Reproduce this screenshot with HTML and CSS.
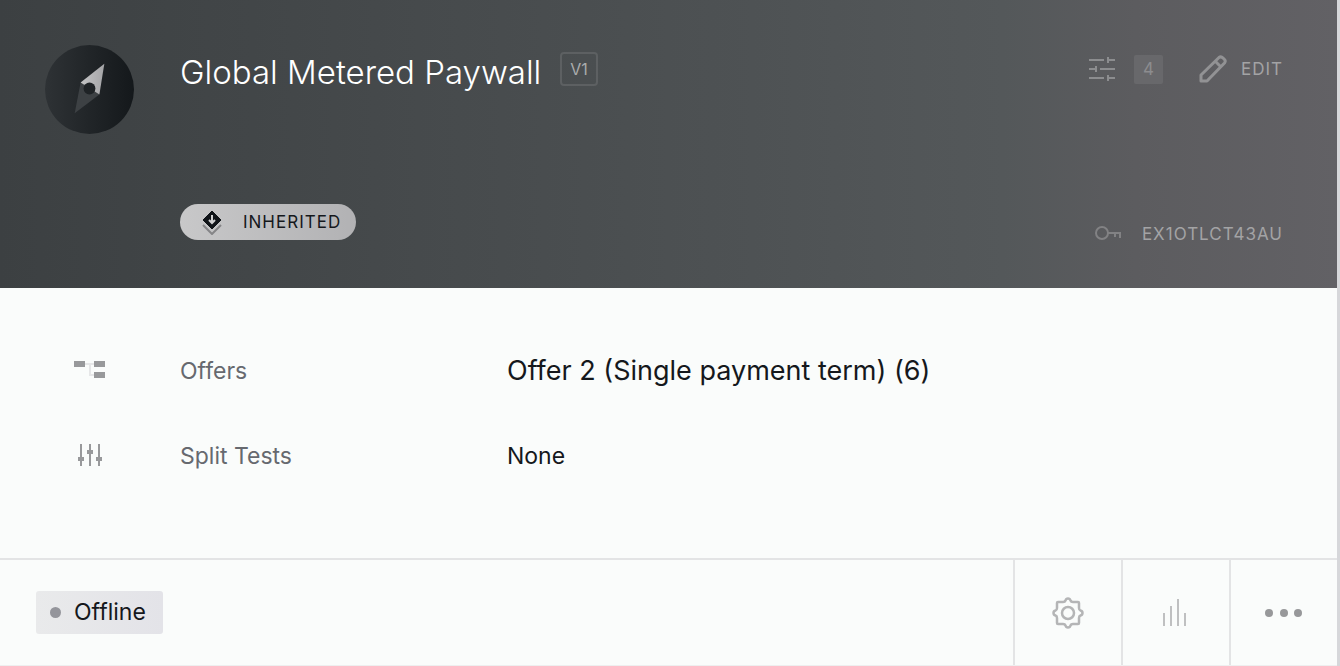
FILE: index.html
```html
<!DOCTYPE html>
<html lang="en">
<head>
    <meta charset="UTF-8">
    <meta name="viewport" content="width=device-width, initial-scale=1.0">
    <title>Global Metered Paywall</title>
    <link rel="stylesheet" href="styles.css">
</head>
<body>
    <main class="card">
        <header class="hero">
            <svg class="avatar" viewBox="0 0 90 90" aria-hidden="true">
                <defs>
                    <linearGradient id="disc">
                        <stop offset="0" stop-color="#2e3235"/>
                        <stop offset="1" stop-color="#14181b"/>
                    </linearGradient>
                    <linearGradient id="needle">
                        <stop offset="0" stop-color="#c4c4c5"/>
                        <stop offset="1" stop-color="#a5a5a8"/>
                    </linearGradient>
                </defs>
                <circle cx="45" cy="45" r="45" fill="url(#disc)"/>
                <path d="M36 38L55 50L30 69Z" fill="#3d4144"/>
                <path d="M60 19L36 38L55 50Z" fill="url(#needle)"/>
                <circle cx="45" cy="44" r="6" fill="#1f2326"/>
            </svg>

            <div class="info">
                <div class="title-row">
                    <h1>Global Metered Paywall</h1>
                    <span class="version">V1</span>
                </div>
                <span class="inherited">
                    <svg width="20" height="26" viewBox="0 0 20 26" aria-hidden="true">
                        <path d="M1 16L10 25L19 16" fill="none" stroke="#858587" stroke-width="2"/>
                        <path d="M10 2L19 11L10 20L1 11Z" fill="#101418" stroke="#101418" stroke-width="1" stroke-linejoin="round"/>
                        <path d="M10 6V14M7 11L10 14L13 11" fill="none" stroke="#d0d0d1" stroke-width="2"/>
                    </svg>
                    INHERITED
                </span>
            </div>

            <div class="actions">
                <div class="tools">
                    <button class="filter" type="button" aria-label="Settings, 4">
                        <svg width="26" height="24" viewBox="0 0 26 24" fill="none" stroke="#8c8d8f" stroke-width="2">
                            <path d="M0 3H15M19 3H26M19 0V6M0 12H7M7 9V15M11 12H26M0 21H15M19 21H26M19 18V24"/>
                        </svg>
                        <span class="count">4</span>
                    </button>
                    <button class="edit" type="button">
                        <svg width="28" height="28" viewBox="0 0 28 28" fill="none" stroke="#929294" stroke-width="3" stroke-linejoin="round">
                            <path d="M2 26V20L20 2.500Q22 1 24 3L25.500 4.500Q27 6 25.500 8L8 26ZM16 6L22 12"/>
                        </svg>
                        EDIT
                    </button>
                </div>
                <div class="key">
                    <svg width="26" height="16" viewBox="0 0 26 16" fill="none" stroke="#828284" stroke-width="2">
                        <circle cx="7" cy="7" r="6"/>
                        <path d="M13 7H25V12M20 7V11"/>
                    </svg>
                    EX1OTLCT43AU
                </div>
            </div>
        </header>

        <dl class="details">
            <div class="row">
                <svg width="32" height="20" viewBox="0 0 32 20" aria-hidden="true">
                    <path d="M11 3H20M16 3V14H20" fill="none" stroke="#e6e7e8" stroke-width="2"/>
                    <path d="M0 0H11V6H0ZM20 0H31V6H20ZM20 11H31V17H20Z" fill="#98999b"/>
                </svg>
                <dt>Offers</dt>
                <dd class="offer">Offer 2 (Single payment term) (6)</dd>
            </div>
            <div class="row">
                <svg width="24" height="24" viewBox="0 0 24 24" aria-hidden="true">
                    <path d="M3 0V22M12 0V22M21 0V22" stroke="#98999b" stroke-width="2"/>
                    <path d="M0 13H6V17H0ZM9 6H15V10H9ZM18 13H24V17H18Z" fill="#98999b"/>
                </svg>
                <dt>Split Tests</dt>
                <dd>None</dd>
            </div>
        </dl>

        <footer class="bar">
            <div class="status-cell">
                <span class="status">Offline</span>
            </div>
            <button type="button" aria-label="Settings">
                <svg width="32" height="32" viewBox="0 0 32 32" fill="none" stroke="#b4b5b6" stroke-width="2.500" stroke-linejoin="round">
                    <path d="M16 1.500Q18 1.500 18.500 3.500Q19 5 21 5L26 5Q27 5 27 6L27 11Q27 13 28.500 13.500Q30.500 14 30.500 16Q30.500 18 28.500 18.500Q27 19 27 21L27 26Q27 27 26 27L21 27Q19 27 18.500 28.500Q18 30.500 16 30.500Q14 30.500 13.500 28.500Q13 27 11 27L6 27Q5 27 5 26L5 21Q5 19 3.500 18.500Q1.500 18 1.500 16Q1.500 14 3.500 13.500Q5 13 5 11L5 6Q5 5 6 5L11 5Q13 5 13.500 3.500Q14 1.500 16 1.500Z"/>
                    <circle cx="16" cy="16" r="6"/>
                </svg>
            </button>
            <button type="button" aria-label="Statistics">
                <svg width="28" height="28" viewBox="0 0 28 28" stroke="#bfc0c1" stroke-width="2">
                    <path d="M2 14V27M9 7V27M16 0V27M23 14V27"/>
                </svg>
            </button>
            <button type="button" aria-label="More">
                <svg width="38" height="8" viewBox="0 0 38 8" fill="#97989a">
                    <circle cx="4" cy="4" r="4"/>
                    <circle cx="19" cy="4" r="4"/>
                    <circle cx="33" cy="4" r="4"/>
                </svg>
            </button>
        </footer>
    </main>
</body>
</html>
```
FILE: styles.css
```css
* {
    box-sizing: border-box;
}

body {
    margin: 0;
    font-family: Inter, "Liberation Sans", sans-serif;
    background: #fafcfb;
    color: #15181c;
}

button {
    display: flex;
    align-items: center;
    padding: 0;
    border: none;
    background: none;
    color: inherit;
    font: inherit;
    cursor: pointer;
}

.card {
    display: flex;
    flex-direction: column;
    min-height: 100vh;
    border-right: 3px solid #d6d7da;
}

/* Header */
.hero {
    display: flex;
    min-height: 288px;
    padding: 45px 54px 42px 45px;
    background: linear-gradient(to right, #3c4042, #54585a 75%, #5c5c5f 85%, #626165);
    color: #fff;
}

.avatar {
    flex: none;
    width: 89px;
    height: 89px;
}

.info {
    display: flex;
    flex: 1;
    flex-direction: column;
    justify-content: space-between;
    align-items: flex-start;
    margin-left: 46px;
    padding-bottom: 6px;
}

.title-row {
    display: flex;
    align-items: flex-start;
    gap: 19px;
}

h1 {
    margin: 0;
    font-size: 33px;
    font-weight: 300;
    line-height: 54px;
}

.version {
    margin-top: 7px;
    padding: 0 8px;
    border: 2px solid #5d6062;
    border-radius: 4px;
    color: #a9abac;
    font-size: 16px;
    line-height: 30px;
}

.inherited {
    display: flex;
    align-items: center;
    gap: 21px;
    height: 36px;
    padding: 0 15px 0 22px;
    border-radius: 18px;
    background: linear-gradient(to right, #c8c8c9, #b2b2b4);
    color: #15181c;
    font-size: 17px;
    letter-spacing: 1px;
}

.actions {
    display: flex;
    flex-direction: column;
    justify-content: space-between;
    align-items: flex-end;
    padding-bottom: 2px;
    color: #a3a3a5;
    font-size: 17px;
    letter-spacing: 1px;
}

.tools {
    display: flex;
    gap: 36px;
    height: 48px;
}

.filter {
    gap: 19px;
}

.count {
    width: 29px;
    border-radius: 2px;
    background: #68686b;
    color: #8c8c8f;
    line-height: 29px;
    text-align: center;
    letter-spacing: 0;
}

.edit {
    gap: 14px;
    letter-spacing: 1px;
}

.key {
    display: flex;
    align-items: center;
    gap: 21px;
}

/* Details */
.details {
    flex: 1;
    margin: 0;
    padding: 40px 0 60px;
}

.row {
    display: grid;
    grid-template-columns: 180px 327px 1fr;
    align-items: center;
    height: 85px;
    font-size: 23px;
}

.row svg {
    justify-self: center;
}

dt {
    color: #66696f;
}

dd {
    margin: 0;
}

.offer {
    font-size: 27px;
}

/* Footer */
.bar {
    display: flex;
    height: 108px;
    border-top: 2px solid #e3e4e5;
    border-bottom: 1px solid #eeefef;
}

.bar button {
    justify-content: center;
    width: 108px;
    border-left: 2px solid #e3e4e5;
}

.status-cell {
    display: flex;
    flex: 1;
    align-items: center;
    padding-left: 36px;
}

.status {
    display: flex;
    align-items: center;
    gap: 13px;
    padding: 0 17px 0 14px;
    border-radius: 3px;
    background: linear-gradient(to right, #e9eaeb, #e3e3e8);
    font-size: 23px;
    line-height: 43px;
}

.status::before {
    content: "";
    width: 11px;
    height: 11px;
    border-radius: 50%;
    background: #94959b;
}
```
